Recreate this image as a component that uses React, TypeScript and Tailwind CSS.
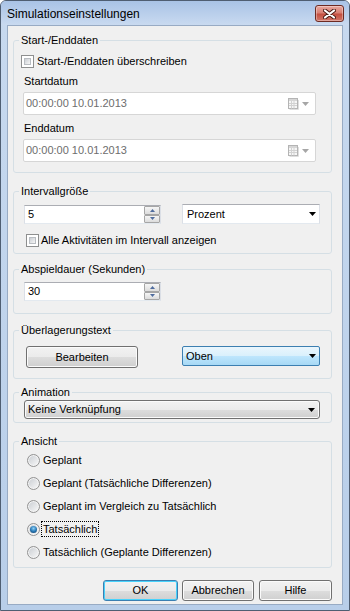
import React from "react";

// Windows 7 basic style dialog: Simulationseinstellungen

function Group({ title, className, children }: { title: string; className: string; children: React.ReactNode }) {
  return (
    <fieldset className={`w-[319px] border border-[#d5dfe5] rounded-[3px] ${className}`}>
      <legend className="ml-[5px] px-[2px] text-[11px] leading-[15px] text-black">{title}</legend>
      {children}
    </fieldset>
  );
}

function CheckBox() {
  return (
    <span className="w-[13px] h-[13px] shrink-0 border border-[#8e8f8f] bg-white p-[2px] flex">
      <span className="flex-1 border border-[#b9bdc2] bg-linear-to-br from-[#cbcfd4] to-[#f6f6f6]" />
    </span>
  );
}

function Radio({ checked }: { checked?: boolean }) {
  return (
    <span className="w-[13px] h-[13px] shrink-0 rounded-full border border-[#939393] bg-linear-to-br from-[#c8ccd1] to-[#fafafa] shadow-[inset_0_0_0_1px_#f4f4f4] flex items-center justify-center">
      {checked && (
        <span className="w-[7px] h-[7px] rounded-full bg-[radial-gradient(circle_at_50%_35%,#8fd0f6_0%,#2a7bb8_50%,#0c3761_100%)]" />
      )}
    </span>
  );
}

function DownArrow({ color }: { color: string }) {
  return (
    <svg width="7" height="4" viewBox="0 0 7 4" className="shrink-0">
      <polygon points="0,0 7,0 3.5,4" fill={color} />
    </svg>
  );
}

function CalendarIcon() {
  return (
    <svg width="11" height="12" viewBox="0 0 11 12" className="shrink-0">
      <rect x="0.5" y="0.5" width="9" height="10" fill="#f6f6f6" stroke="#b4b4b4" />
      <rect x="1" y="1" width="8" height="2" fill="#d6d6d6" />
      <path d="M1 5.5H9M1 7.5H9M3.5 3V10.5M6 3V10.5" stroke="#d2d2d2" />
      <path d="M10.5 2V11.5H1.5" stroke="#dedede" fill="none" />
    </svg>
  );
}

function DateBox({ className }: { className: string }) {
  return (
    <div className={`w-[293px] h-[23px] ml-[9px] bg-white border border-[#d6d6d6] rounded-[2px] flex items-center pl-[2px] pr-[6px] ${className}`}>
      <span className="flex-1 text-[11px] leading-[15px] text-[#6d6d6d]">00:00:00 10.01.2013</span>
      <CalendarIcon />
      <span className="ml-[3px] flex">
        <DownArrow color="#a6a6a6" />
      </span>
    </div>
  );
}

function SpinHalf({ up }: { up?: boolean }) {
  return (
    <span className="flex-1 border border-[#a6a6a6] rounded-[1px] bg-linear-to-b from-[#f6f6f6] to-[#dcdcdc] flex items-center justify-center">
      <svg width="5" height="3" viewBox="0 0 5 3">
        <polygon points={up ? "0,3 5,3 2.5,0" : "0,0 5,0 2.5,3"} fill="#4f6c9e" />
      </svg>
    </span>
  );
}

function SpinBox({ value, className }: { value: string; className: string }) {
  return (
    <div className={`w-[137px] h-[19px] ml-[10px] bg-white border border-[#abadb3] border-x-[#dbdfe6] border-b-[#e3e9ef] flex ${className}`}>
      <span className="flex-1 pl-[3px] text-[11px] leading-[17px] text-black">{value}</span>
      <span className="w-[16px] flex flex-col">
        <SpinHalf up />
        <SpinHalf />
      </span>
    </div>
  );
}

const buttonFace =
  "border border-[#707070] rounded-[3px] bg-[linear-gradient(to_bottom,#f2f2f2_0%,#ebebeb_50%,#dddddd_51%,#cfcfcf_100%)] shadow-[inset_0_0_0_1px_#fbfbfb]";

function Button({ label, className }: { label: string; className: string }) {
  return (
    <button className={`${buttonFace} text-[11px] leading-[15px] text-black flex items-center justify-center ${className}`}>
      {label}
    </button>
  );
}

export default function App() {
  return (
    <div className="w-[350px] h-[611px] flex flex-col rounded-t-[6px] border border-[#4f5e72] bg-[#bfd3ed] font-['Liberation_Sans',Arial,sans-serif] text-black overflow-hidden">
      {/* title bar */}
      <div className="h-[24px] shrink-0 flex items-start pl-[6px] pr-[5px] bg-linear-to-b from-[#a9c3e6] to-[#c9daf0]">
        <span className="flex-1 text-[12px] leading-[15px] mt-[6px]">Simulationseinstellungen</span>
        <span className="mt-[4px] w-[29px] h-[17px] rounded-[3px] border border-[#6d2a22] bg-[linear-gradient(to_bottom,#e8a89e_0%,#d88074_45%,#c44f40_55%,#d1776a_100%)] shadow-[inset_0_0_0_1px_rgba(255,255,255,0.35)] flex items-center justify-center">
          <svg width="13" height="10" viewBox="0 0 13 10">
            <path d="M2 1.5L11 8.5M11 1.5L2 8.5" stroke="#4a1a14" strokeWidth="4" strokeLinecap="round" />
            <path d="M2 1.5L11 8.5M11 1.5L2 8.5" stroke="#ffffff" strokeWidth="2.2" strokeLinecap="round" />
          </svg>
        </span>
      </div>

      {/* frame + client area */}
      <div className="flex-1 flex px-[6px] pb-[5px] bg-linear-to-b from-[#c7d9ef] to-[#b8cee9]">
        <div className="flex-1 flex flex-col border border-[#98abc4] bg-[#f0f0f0] pl-[5px]">
          <Group title="Start-/Enddaten" className="mt-[7px]">
            <div className="flex flex-col pb-[10px]">
              <label className="mt-[5px] h-[16px] ml-[7px] flex items-center gap-[3px] text-[11px] leading-[15px]">
                <CheckBox />
                <span>Start-/Enddaten überschreiben</span>
              </label>
              <span className="mt-[5px] ml-[10px] text-[11px] leading-[15px]">Startdatum</span>
              <DateBox className="mt-[3px]" />
              <span className="mt-[6px] ml-[10px] text-[11px] leading-[15px]">Enddatum</span>
              <DateBox className="mt-[3px]" />
            </div>
          </Group>

          <Group title="Intervallgröße" className="mt-[11px]">
            <div className="flex flex-col pb-[5px]">
              <div className="mt-[5px] flex items-start">
                <SpinBox value="5" className="mt-[1px]" />
                <div className="ml-[21px] w-[138px] h-[20px] bg-white border border-[#abadb3] border-x-[#dbdfe6] border-b-[#e3e9ef] flex items-center pl-[4px] pr-[3px]">
                  <span className="flex-1 text-[11px] leading-[15px]">Prozent</span>
                  <DownArrow color="#000000" />
                </div>
              </div>
              <label className="mt-[8px] h-[16px] ml-[12px] flex items-center gap-[2px] text-[11px] leading-[15px]">
                <CheckBox />
                <span>Alle Aktivitäten im Intervall anzeigen</span>
              </label>
            </div>
          </Group>

          <Group title="Abspieldauer (Sekunden)" className="mt-[8px]">
            <div className="flex flex-col pb-[12px]">
              <SpinBox value="30" className="mt-[5px]" />
            </div>
          </Group>

          <Group title="Überlagerungstext" className="mt-[9px]">
            <div className="flex items-start pb-[10px] pt-[8px]">
              <Button label="Bearbeiten" className="ml-[12px] w-[112px] h-[22px]" />
              <div className="ml-[44px] w-[138px] h-[20px] rounded-[2px] border border-[#3c7fb1] bg-[linear-gradient(to_bottom,#eaf6fd_0%,#d9f0fc_50%,#bee6fd_51%,#a7d9f5_100%)] flex items-center pl-[3px] pr-[3px]">
                <span className="flex-1 text-[11px] leading-[15px]">Oben</span>
                <DownArrow color="#000000" />
              </div>
            </div>
          </Group>

          <Group title="Animation" className="mt-[6px]">
            <div className="flex flex-col pb-[3px]">
              <div className={`${buttonFace} ml-[10px] w-[296px] h-[19px] flex items-center pl-[3px] pr-[4px]`}>
                <span className="flex-1 text-[11px] leading-[15px]">Keine Verknüpfung</span>
                <DownArrow color="#000000" />
              </div>
            </div>
          </Group>

          <Group title="Ansicht" className="mt-[11px]">
            <div className="flex flex-col gap-[7px] pt-[3px] pb-[7px]">
              {[
                "Geplant",
                "Geplant (Tatsächliche Differenzen)",
                "Geplant im Vergleich zu Tatsächlich",
                "Tatsächlich",
                "Tatsächlich (Geplante Differenzen)",
              ].map((t) => {
                const sel = t === "Tatsächlich";
                return (
                  <label key={t} className="h-[16px] ml-[13px] flex items-center gap-[1px] text-[11px] leading-[14px]">
                    <Radio checked={sel} />
                    <span className={sel ? "ml-[1px] px-[1px] outline-1 outline-dotted outline-black" : "ml-[1px] px-[1px]"}>{t}</span>
                  </label>
                );
              })}
            </div>
          </Group>

          <div className="mt-[12px] flex">
            <button className="ml-[90px] w-[75px] h-[21px] rounded-[3px] border border-[#3c7fb1] bg-[linear-gradient(to_bottom,#f2f2f2_0%,#ebebeb_50%,#dddddd_51%,#cfcfcf_100%)] shadow-[inset_0_0_0_1px_#48d2fb] text-[11px] leading-[15px] flex items-center justify-center">
              OK
            </button>
            <Button label="Abbrechen" className="ml-[4px] w-[72px] h-[21px]" />
            <Button label="Hilfe" className="ml-[5px] w-[73px] h-[21px]" />
          </div>
        </div>
      </div>
    </div>
  );
}
